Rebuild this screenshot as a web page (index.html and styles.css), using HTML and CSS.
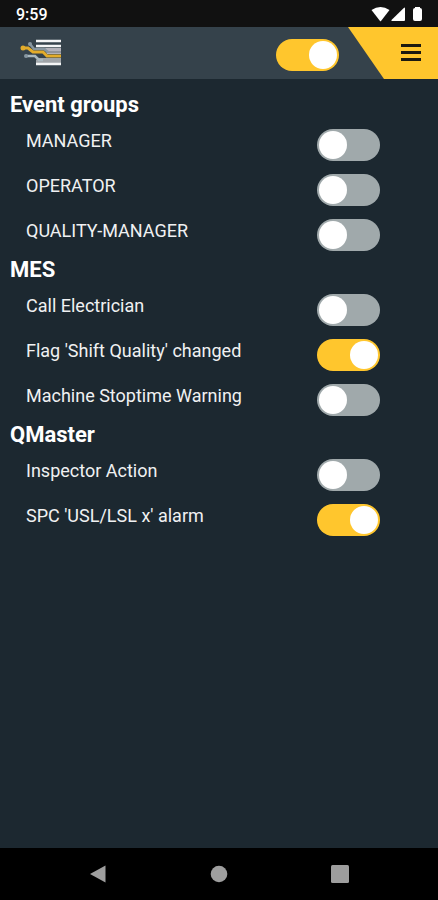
FILE: index.html
```html
<!DOCTYPE html>
<html lang="en">
<head>
<meta charset="utf-8">
<meta name="viewport" content="width=device-width, initial-scale=1">
<title>Event groups</title>
<link rel="stylesheet" href="styles.css">
</head>
<body>
<div class="status">
  <span>9:59</span>
  <svg class="status-icons" width="54" height="18" viewBox="0 0 54 18" fill="#fff" aria-hidden="true">
    <path d="M0.500 5Q9.500 -1 18.500 5L10 16Q9.500 16.500 9 16Z"/>
    <path d="M34 3.500Q34 2 32.800 3L20.500 15Q20 16 21 16H33Q34 16 34 15Z"/>
    <path d="M42 5Q42 3 44 3V2H49V3Q51 3 51 5V14Q51 16 49 16H44Q42 16 42 14Z"/>
  </svg>
</div>
<header class="header">
  <svg class="logo" width="42" height="28" viewBox="0 0 42 28" fill="none" aria-hidden="true">
    <path d="M25 9H41V15H27Z" fill="#b3b2ba"/>
    <path d="M18 19H41V24H16V21Z" fill="#a0a4a8"/>
    <path d="M27 13H41" stroke="#85898f" stroke-width="1.500"/>
    <path d="M16 2H41M16 7H41M16 25H41" stroke="#f4f5f6" stroke-width="2.500"/>
    <path d="M10 5L14 10H24L28 13" stroke="#8796a0" stroke-width="2.500"/>
    <circle cx="10" cy="5" r="2" fill="#8796a0"/>
    <path d="M6 17H15L19 21H23" stroke="#a9b8bf" stroke-width="2.500"/>
    <circle cx="6" cy="17" r="2" fill="#8796a0"/>
    <path d="M2 9H8L13 13H23L27 17H41" stroke="#e3ac2b" stroke-width="3"/>
    <circle cx="3" cy="9" r="2.500" fill="#e3ac2b"/>
  </svg>
  <input class="switch" type="checkbox" role="switch" aria-label="Notifications" checked>
  <button class="menu" type="button" aria-label="Menu">
    <svg width="20" height="20" viewBox="0 0 20 20" stroke="#1c1a10" stroke-width="3" aria-hidden="true"><path d="M0 2.500H20M0 9.500H20M0 16.500H20"/></svg>
  </button>
</header>
<main class="content">
  <section>
    <h2>Event groups</h2>
    <label class="row"><span>MANAGER</span><input class="switch" type="checkbox" role="switch"></label>
    <label class="row"><span>OPERATOR</span><input class="switch" type="checkbox" role="switch"></label>
    <label class="row"><span>QUALITY-MANAGER</span><input class="switch" type="checkbox" role="switch"></label>
  </section>
  <section>
    <h2>MES</h2>
    <label class="row"><span>Call Electrician</span><input class="switch" type="checkbox" role="switch"></label>
    <label class="row"><span>Flag 'Shift Quality' changed</span><input class="switch" type="checkbox" role="switch" checked></label>
    <label class="row"><span>Machine Stoptime Warning</span><input class="switch" type="checkbox" role="switch"></label>
  </section>
  <section>
    <h2>QMaster</h2>
    <label class="row"><span>Inspector Action</span><input class="switch" type="checkbox" role="switch"></label>
    <label class="row"><span>SPC 'USL/LSL x' alarm</span><input class="switch" type="checkbox" role="switch" checked></label>
  </section>
</main>
<nav class="navbar" aria-label="System">
  <button type="button" aria-label="Back"><svg width="18" height="18" viewBox="0 0 18 18"><path d="M16.500 0.500V17.500L1 9Z"/></svg></button>
  <button type="button" aria-label="Home"><svg width="18" height="18" viewBox="0 0 18 18"><circle cx="9" cy="9" r="8.300"/></svg></button>
  <button type="button" aria-label="Recent apps"><svg width="18" height="18" viewBox="0 0 18 18"><rect width="18" height="18" rx="1.500"/></svg></button>
</nav>
</body>
</html>
```
FILE: styles.css
```css
* {
  box-sizing: border-box;
}

body {
  margin: 0;
  min-height: 100vh;
  display: flex;
  flex-direction: column;
  background: #1c2830;
  color: #f0f1f2;
  font-family: Roboto, sans-serif;
}

button {
  border: 0;
  padding: 0;
  background: none;
}

.status {
  height: 27px;
  padding: 2px 13px 0 16px;
  display: flex;
  align-items: center;
  justify-content: space-between;
  background: #111;
  color: #fff;
  font-size: 16px;
  font-weight: 500;
}

.status-icons {
  margin-bottom: 2px;
}

.header {
  height: 52px;
  padding-left: 20px;
  display: flex;
  align-items: center;
  background: #35424b;
}

.header .switch {
  margin: 3px 9px 0 auto;
}

.menu {
  width: 90px;
  height: 52px;
  padding-left: 36px;
  display: flex;
  align-items: center;
  justify-content: center;
  background: #ffc62d;
  clip-path: polygon(0 0, 100% 0, 100% 100%, 36px 100%);
}

.switch {
  appearance: none;
  flex: none;
  width: 63px;
  height: 32px;
  margin: 0;
  padding: 2px;
  display: flex;
  border-radius: 16px;
  background: #a0a9ab;
}

.switch::before {
  content: "";
  width: 28px;
  height: 28px;
  border-radius: 50%;
  background: #fff;
}

.switch:checked {
  justify-content: flex-end;
  background: #ffc62d;
}

.content {
  flex: 1;
  padding: 13px 58px 0 10px;
}

h2 {
  margin: 0;
  padding-bottom: 4px;
  color: #fff;
  font-size: 22px;
  font-weight: 700;
  line-height: 26px;
}

.row {
  padding: 7px 0 6px 16px;
  display: flex;
  align-items: flex-start;
  justify-content: space-between;
  font-size: 18px;
  line-height: 24px;
}

.navbar {
  height: 52px;
  padding: 0 38px;
  display: flex;
  align-items: center;
  justify-content: space-between;
  background: #000;
}

.navbar button {
  flex: 1;
  height: 52px;
  display: flex;
  align-items: center;
  justify-content: center;
}

.navbar svg {
  fill: #9e9e9e;
}
```
